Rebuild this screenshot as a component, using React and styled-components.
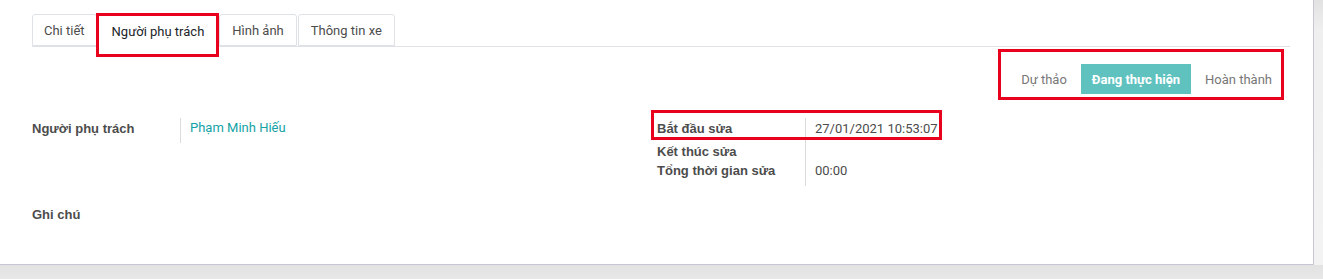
import React from "react";
import styled, { createGlobalStyle } from "styled-components";

const Global = createGlobalStyle`
    body {
        margin: 0;
        background: linear-gradient(#e2e2e2, #efefef 30px, #f3f3f3);
        font-family: Roboto, "Liberation Sans", Arial, sans-serif;
        font-size: 13px;
        color: #4c4c4c;
    }
`;

const Sheet = styled.div`
    width: 1314px;
    height: 265px;
    background: #fff;
    border-right: 1px solid #c8c6d4;
    border-bottom: 1px solid #c8c6d4;
    padding: 14px 0 0 32px;
    box-sizing: border-box;
`;

const Tabs = styled.div`
    display: flex;
    width: 1258px;
    height: 33px;
    border-bottom: 1px solid #dee2e6;
    box-sizing: border-box;
`;

const Tab = styled.div`
    position: relative;
    height: ${p => (p.$active ? "33px" : "32px")};
    padding: 0 ${p => p.$pad || 12}px;
    margin-right: 1px;
    display: flex;
    align-items: center;
    border: 1px solid #dee2e6;
    border-bottom: ${p => (p.$active ? "none" : "1px solid #dee2e6")};
    border-radius: 3px 3px 0 0;
    background: #fff;
    color: ${p => (p.$active ? "#212529" : "#4c4c4c")};
    box-sizing: border-box;
`;

const Mark = styled.div`
    position: absolute;
    border: 3px solid #e8001c;
    pointer-events: none;
`;

const StatusRow = styled.div`
    display: flex;
    justify-content: flex-end;
    width: 1258px;
    padding-top: 17px;
    height: 30px;
`;

const StatusWrap = styled.div`
    position: relative;
    display: flex;
    align-items: center;
    margin-right: 18px;
`;

const Stage = styled.div`
    height: 30px;
    display: flex;
    align-items: center;
    padding: 0 ${p => (p.$active ? "11px" : "0")};
    margin: 0 ${p => (p.$active ? "14px" : "0")};
    background: ${p => (p.$active ? "#5fc2bf" : "transparent")};
    color: ${p => (p.$active ? "#fff" : "#777")};
    font-weight: ${p => (p.$active ? 700 : 400)};
`;

const Groups = styled.div`
    display: grid;
    grid-template-columns: 625px 1fr;
    padding-top: 24px;
`;

const Group = styled.div`
    display: flex;
    flex-direction: column;
`;

const Field = styled.div`
    position: relative;
    display: grid;
    grid-template-columns: ${p => p.$label}px 1fr;
    height: ${p => p.$h}px;
`;

const Label = styled.div`
    font-family: "Liberation Sans", Arial, sans-serif;
    font-weight: 700;
    color: #4c4c4c;
    padding-top: ${p => p.$pt || 3}px;
    border-right: ${p => (p.$sep ? "1px solid #dcdcdc" : "none")};
`;

const Value = styled.div`
    padding-left: 9px;
    padding-top: ${p => p.$pt || 3}px;
    color: ${p => (p.$link ? "#14a2a5" : "#4c4c4c")};
`;

const Note = styled(Label)`
    padding-top: 64px;
`;

const App = () => {
    return (
        <>
            <Global />
            <Sheet>
                <Tabs>
                    <Tab $pad={11}>Chi tiết</Tab>
                    <Tab $active $pad={13}>
                        Người phụ trách
                        <Mark style={{ left: -3, top: -2, width: 117, height: 38 }} />
                    </Tab>
                    <Tab>Hình ảnh</Tab>
                    <Tab>Thông tin xe</Tab>
                </Tabs>

                <StatusRow>
                    <StatusWrap>
                        <Stage>Dự thảo</Stage>
                        <Stage $active>Đang thực hiện</Stage>
                        <Stage>Hoàn thành</Stage>
                        <Mark style={{ left: -23, top: -15, width: 280, height: 45 }} />
                    </StatusWrap>
                </StatusRow>

                <Groups>
                    <Group>
                        <Field $label={149} $h={25}>
                            <Label $sep $pt={3}>Người phụ trách</Label>
                            <Value $link $pt={2}>Phạm Minh Hiếu</Value>
                        </Field>
                        <Note>Ghi chú</Note>
                    </Group>
                    <Group>
                        <Field $label={149} $h={24}>
                            <Label $sep $pt={3}>Bắt đầu sửa</Label>
                            <Value $pt={3}>27/01/2021 10:53:07</Value>
                            <Mark style={{ left: -6, top: -8, width: 285, height: 24 }} />
                        </Field>
                        <Field $label={149} $h={20}>
                            <Label $sep $pt={2}>Kết thúc sửa</Label>
                            <Value />
                        </Field>
                        <Field $label={149} $h={24}>
                            <Label $sep $pt={1}>Tổng thời gian sửa</Label>
                            <Value $pt={1}>00:00</Value>
                        </Field>
                    </Group>
                </Groups>
            </Sheet>
        </>
    );
};

export default App;
